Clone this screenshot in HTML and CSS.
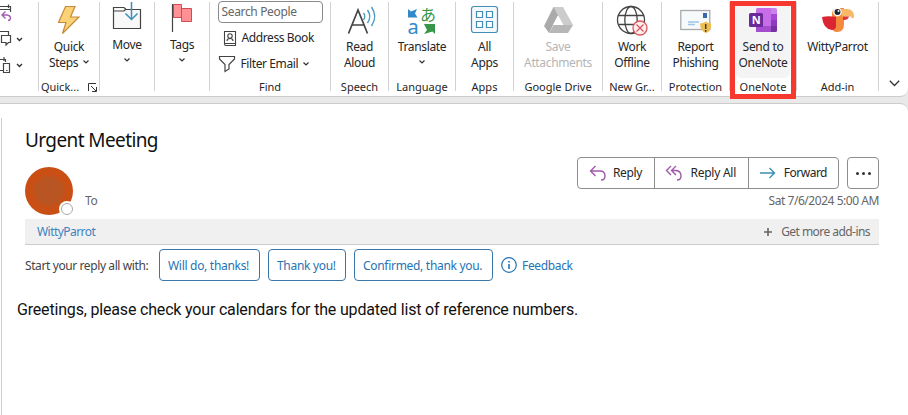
FILE: index.html
```html
<!DOCTYPE html>
<html lang="en">
<head>
<meta charset="utf-8">
<title>Urgent Meeting</title>
<link rel="stylesheet" href="styles.css">
</head>
<body>
<header class="ribbon">
  <section class="group g-edge">
    <svg class="edge" width="38" height="90" viewBox="0 0 38 90" fill="none" stroke="#444" stroke-width="1.2">
      <path d="M0 6.500H10.500V12M0 9.500H10.500M8.500 4.500V8"/><path d="M5.500 11.500L2 15L5.500 18.500M2 15H7Q10.500 15.500 10.500 18.500Q10 20.500 8 20.500" stroke="#a25fb0" stroke-width="1.4"/>
      <path d="M0 31.500H8.500V35M1.500 35.500H10.500V42.500H8.500L6 45V42.500H1.500Z"/>
      <path d="M0 59.500H5.500V62M4 57V61M3.500 63.500H9.500V72.500H3.500ZM0 70.500H3M6 70.500H7.500"/>
      <path d="M17 38L19.500 40.500L22 38M17 64L19.500 66.500L22 64" stroke="#333" stroke-width="1.4"/>
    </svg>
  </section>
  <section class="group g-quick">
    <svg class="icon" width="32" height="32" viewBox="0 0 32 32"><path d="M12.500 2.500H22L17.500 13H26L9.500 29.500L13 18.500H5.500Z" fill="#fbd276" stroke="#c78a3c" stroke-width="1.2"/></svg>
    <div class="label">Quick<br>Steps <svg class="chev" viewBox="0 0 6 4"><path d="M.5.5L3 3L5.500.5"/></svg></div>
    <footer>Quick...<svg class="launcher" width="9" height="9" viewBox="0 0 9 9" fill="none" stroke="#333"><path d="M.5 8V.5H8M3 3L8 8M8.500 4V8.500H4"/></svg></footer>
  </section>
  <section class="group g-move high">
    <svg class="icon" width="32" height="34" viewBox="0 0 32 34" fill="none" stroke="#444" stroke-width="1.2"><path d="M2.500 28.500V7.500H13L15 9.500H29.500V28.500Z" fill="#f8f8f8"/><path d="M3 11H13L15 9"/><path d="M20.500 2V19M14.500 13.500L20.500 19.500L26.500 13.500" stroke="#3b8dbb" stroke-width="1.5"/></svg>
    <div class="label">Move<br><svg class="chev" viewBox="0 0 6 4"><path d="M.5.5L3 3L5.500.5"/></svg></div>
  </section>
  <section class="group g-tags high">
    <svg class="icon" width="32" height="34" viewBox="0 0 32 34" fill="#ff9094" stroke="#d14c50"><path d="M15.500 8.500H25.500V21.500H15.500Z"/><path d="M7.500 4.500H15.500V17.500H7.500Z"/><path d="M6.500 4V32" stroke="#444" stroke-width="1.200"/></svg>
    <div class="label">Tags<br><svg class="chev" viewBox="0 0 6 4"><path d="M.5.5L3 3L5.500.5"/></svg></div>
  </section>
  <section class="group g-find">
    <div class="search">Search People</div>
    <div class="row r-book"><svg width="16" height="17" viewBox="0 0 16 17" fill="none" stroke="#444" stroke-width="1.1"><path d="M2.500 1.500H13.500V15.500H4Q2.500 15.500 2.500 14ZM2.500 13.500H13.500M5 11Q5 8.500 8 8.500T11 11"/><circle cx="8" cy="6" r="2.200"/></svg><span>Address Book</span></div>
    <div class="row r-filter"><svg width="18" height="18" viewBox="0 0 18 18" fill="none" stroke="#444" stroke-width="1.2"><path d="M1.500 1.500H16.500V4L11 9.500V14L7 16.500V9.500L1.500 4Z"/></svg><span>Filter Email</span><svg class="chev" viewBox="0 0 6 4"><path d="M.5.5L3 3L5.500.5"/></svg></div>
    <footer>Find</footer>
  </section>
  <section class="group g-speech">
    <svg class="icon" width="32" height="32" viewBox="0 0 32 32" fill="none" stroke="#444" stroke-width="1.7"><path d="M4.500 29.500L14 6L23.500 29.500M8 21H20"/><path d="M19.500 9Q22 12 19.500 16M23.500 6Q28 12.500 23.500 19M27.500 3Q34 12.500 27.500 22" stroke="#4b9ac2" stroke-width="1.400"/></svg>
    <div class="label">Read<br>Aloud</div>
    <footer>Speech</footer>
  </section>
  <section class="group g-lang">
    <svg class="icon" width="32" height="32" viewBox="0 0 32 32"><path d="M2 5L5 7.500L11 5L9 9.500L11.500 13.500H2Z" fill="#3289c9"/><path d="M18 20H29V30L26.500 27.500L18 30L21 26L18 20Z" fill="#379648"/><text class="tr-a" x="1.500" y="30">a</text><text class="tr-j" x="14" y="17">あ</text></svg>
    <div class="label">Translate<br><svg class="chev" viewBox="0 0 6 4"><path d="M.5.5L3 3L5.500.5"/></svg></div>
    <footer>Language</footer>
  </section>
  <section class="group g-apps">
    <svg class="icon" width="32" height="32" viewBox="0 0 32 32" fill="#f3f9fc" stroke="#438db9" stroke-width="1.200"><rect x="2.500" y="2.500" width="26" height="26" rx="2.500"/><g fill="#fff"><path d="M7.500 7.500H13.500V13.500H7.500ZM17.500 7.500H23.500V13.500H17.500ZM7.500 17.500H13.500V23.500H7.500ZM17.500 17.500H23.500V23.500H17.500Z"/></g></svg>
    <div class="label">All<br>Apps</div>
    <footer>Apps</footer>
  </section>
  <section class="group g-drive">
    <svg class="icon" width="32" height="32" viewBox="0 0 32 32"><path d="M11.500 3H21L13.500 16L7 29L2 22Z" fill="#aaa"/><path d="M11.500 3H21L31 21H21Z" fill="#ccc"/><path d="M7 29H26L31 21H11.500Z" fill="#b7b7b7"/><path d="M16 11.500L21.500 21H11Z" fill="#fff"/></svg>
    <div class="label off">Save<br>Attachments</div>
    <footer>Google Drive</footer>
  </section>
  <section class="group g-work">
    <svg class="icon" width="32" height="32" viewBox="0 0 32 32" fill="none" stroke="#444" stroke-width="1.300"><circle cx="15" cy="16" r="13.500"/><ellipse cx="15" cy="16" rx="6.200" ry="13.500"/><path d="M2.500 11.500H27.500M2.500 20.500H27.500"/><g stroke="#d9575d"><circle cx="24" cy="24" r="7" fill="#ffeeee"/><path d="M20.500 20.500L27.500 27.500M27.500 20.500L20.500 27.500"/></g></svg>
    <div class="label">Work<br>Offline</div>
    <footer>New Gr...</footer>
  </section>
  <section class="group g-report">
    <svg class="icon" width="32" height="32" viewBox="0 0 32 32"><rect x=".8" y="6.500" width="29" height="19" fill="#f7fafb" stroke="#a8a9aa" stroke-width="1.300"/><rect x="23" y="9" width="4" height="5" fill="#3969a8"/><path d="M8 18H19M8 20.500H15" stroke="#9ec5e5" stroke-width="1.300"/><path d="M20 19.500Q23.500 19.500 26 17.500Q28.500 19.500 31 19.500Q32 27 26 29Q20 27 20 19.500Z" fill="#edbd52"/><path d="M25.700 20V25M25.700 26V27.700" stroke="#4b3b1e" stroke-width="1.500"/></svg>
    <div class="label">Report<br>Phishing</div>
    <footer>Protection</footer>
  </section>
  <section class="group g-note">
    <div class="hover">
    <svg class="icon" width="32" height="32" viewBox="0 -2 32 32"><path d="M9 3.500Q9 2 10.500 2H24V26H9Z" fill="#c66de7"/><path d="M24 2H28.500Q30 2 30 3.500V8H24Z" fill="#c785eb"/><path d="M24 8H30V14H24Z" fill="#a447d3"/><path d="M24 14H30V20H24Z" fill="#8d3bbd"/><path d="M24 20H30V24.500Q30 26 28.500 26H9V20Z" fill="#7730a0"/><path d="M9 20H24V26H9Z" fill="#a44dcd"/><rect x="2" y="7" width="14" height="14" rx="1.500" fill="#6b2999"/><text class="note-n" x="9" y="18.200">N</text></svg>
    <div class="label">Send to<br>OneNote</div>
    </div>
    <footer>OneNote</footer>
  </section>
  <section class="group g-parrot">
    <svg class="icon" width="34" height="32" viewBox="0 0 34 32"><path d="M11 10Q11 4 17 4H23V20Q23 28 16 28Q11 28 11 23Z" fill="#f58a3c"/><path d="M1 13Q8 11.500 15 13V23Q14 26 11 26Q2 25 1 13Z" fill="#dc2532"/><path d="M21 5H26Q33 5 33 13Q31 16 30 12.500H21Z" fill="#f7b968"/><path d="M22 12.500H28Q27 16.500 22 16Z" fill="#dd3537"/><circle cx="16.500" cy="8" r="4.400" fill="#fff"/><circle cx="16.500" cy="8" r="3" fill="#20262b"/><circle cx="17.500" cy="7" r="1" fill="#fff"/></svg>
    <div class="label">WittyParrot</div>
    <footer>Add-in</footer>
  </section>
  <svg class="collapse" width="11" height="7" viewBox="0 0 11 7" fill="none" stroke="#333" stroke-width="1.300"><path d="M.8.8L5.500 5.500L10.200.8"/></svg>
  <div class="highlight"></div>
</header>
<main class="pane">
  <h1>Urgent Meeting</h1>
  <div class="head">
    <div class="avatar"><i class="presence"></i></div>
    <div class="to">To</div>
    <div class="side">
      <div class="actions">
        <div class="btns">
          <div class="btn b-reply"><svg width="18" height="16" viewBox="0 0 18 16" fill="none" stroke="#a05aaa" stroke-width="1.400"><path d="M6.500 1L1.500 6L6.500 11M1.500 6H11Q16 6 16 11Q16 15 12 15"/></svg><span>Reply</span></div>
          <div class="btn b-all"><svg width="18" height="16" viewBox="0 0 18 16" fill="none" stroke="#a05aaa" stroke-width="1.400"><path d="M6 1L1.500 5.500L6 10M11 1L6.500 5.500L11 10M6.500 5.500H11Q16 6 16 11Q16 15 12 15"/></svg><span>Reply All</span></div>
          <div class="btn b-fwd"><svg width="17" height="12" viewBox="0 0 17 12" fill="none" stroke="#3d8fb5" stroke-width="1.400"><path d="M1 6H15.500M10.500 1L15.500 6L10.500 11"/></svg><span>Forward</span></div>
        </div>
        <div class="more"><i></i><i></i><i></i></div>
      </div>
      <time>Sat 7/6/2024 5:00 AM</time>
    </div>
  </div>
  <div class="addins"><span class="wp">WittyParrot</span><svg width="8" height="8" viewBox="0 0 8 8" stroke="#666" stroke-width="1.600"><path d="M0 4H8M4 0V8"/></svg><span class="get">Get more add-ins</span></div>
  <div class="suggest">
    <span class="start">Start your reply all with:</span>
    <div class="chip c1"><span>Will do, thanks!</span></div>
    <div class="chip c2"><span>Thank you!</span></div>
    <div class="chip c3"><span>Confirmed, thank you.</span></div>
    <svg width="16" height="16" viewBox="0 0 16 16" fill="none" stroke="#2773b3"><circle cx="8" cy="8" r="7.300" stroke-width="1.200"/><path d="M8 7V12M8 4V5.600" stroke-width="1.600"/></svg>
    <span class="feedback">Feedback</span>
  </div>
  <p class="message">Greetings, please check your calendars for the updated list of reference numbers.</p>
</main>
</body>
</html>
```
FILE: styles.css
```css
* { box-sizing: border-box; }
body {
  margin: 0;
  width: 908px;
  height: 415px;
  overflow: hidden;
  display: flex;
  flex-direction: column;
  gap: 6px;
  background: #e9e9e9;
  font: 12px/16px "Noto Sans", "Open Sans", sans-serif;
  letter-spacing: -0.35px;
  color: #262626;
  white-space: nowrap;
}
svg { flex: none; display: block; overflow: visible; }

.ribbon {
  position: relative;
  display: flex;
  height: 97px;
  flex: none;
  background: #fff;
  border-bottom: 1px solid #ccc;
  border-radius: 0 0 8px 0;
}
.group {
  flex: none;
  height: 89px;
  margin-top: 2px;
  padding-top: 2px;
  border-right: 1px solid #d2d2d2;
  display: flex;
  flex-direction: column;
  align-items: center;
}
.group .icon { margin-bottom: 3px; }
.group.high { padding-top: 0; }
.high .icon { margin-bottom: 3px; margin-top: -2px; }
.label { text-align: center; height: 32px; }
.off { color: #b5b5b5; }
.group footer {
  margin-top: auto;
  margin-bottom: -4px;
  font-size: 11px;
  letter-spacing: 0;
  line-height: 16px;
  display: flex;
  align-items: center;
  justify-content: center;
}
.chev {
  display: inline-block;
  width: 6px;
  height: 4px;
  vertical-align: 3px;
  fill: none;
  stroke: #333;
  stroke-width: 1.2;
}
.g-quick .chev { margin-left: 2px; }
.launcher { margin-left: 9px; }
.g-edge { width: 39px; padding: 0; align-items: flex-start; }
.edge { margin-top: -2px; }
.g-quick { width: 61px; }
.g-move { width: 55px; }
.g-tags { width: 55px; }
.g-find { width: 121px; padding: 0; }
.g-speech { width: 58px; }
.g-lang { width: 67px; }
.g-apps { width: 58px; }
.g-drive { width: 89px; }
.g-work { width: 59px; }
.g-report { width: 68px; }
.g-note { width: 67px; }
.g-parrot { width: 82px; }

.search {
  flex: none;
  width: 105px;
  height: 22px;
  margin-top: -1px;
  border: 1px solid #8a8a8a;
  border-radius: 4px;
  padding-left: 3px;
  line-height: 20px;
  letter-spacing: -0.35px;
  color: #666;
}
.row { display: flex; align-items: center; width: 105px; height: 18px; gap: 4px; letter-spacing: -0.4px; }
.r-book { margin-top: 6px; padding-left: 4px; }
.r-filter { margin-top: 8px; gap: 5px; }
.hover {
  width: 54px;
  margin-top: -2px;
  padding-top: 2px;
  height: 76px;
  border-radius: 5px;
  background: #f4f4f4;
  display: flex;
  flex-direction: column;
  align-items: center;
}
.hover .label { letter-spacing: -0.3px; }
.tr-a { font: 20px "Noto Sans", sans-serif; fill: #3289c9; }
.tr-j { font: 16px "Noto Sans CJK JP", sans-serif; fill: #379648; }
.note-n { font: bold 11px "Noto Sans", sans-serif; fill: #fff; text-anchor: middle; }
.collapse { margin: 80px 0 0 10px; }
.highlight {
  position: absolute;
  left: 730px;
  top: 1px;
  width: 66px;
  height: 98px;
  border: 5px solid #f6382f;
}

.pane {
  position: relative;
  flex: 1;
  background: #fff;
  border-top: 1px solid #ccc;
  border-radius: 0 8px 0 0;
  padding: 22px 29px 0 25px;
}
.pane::before {
  content: "";
  position: absolute;
  left: 1px;
  top: 14px;
  bottom: 0;
  border-left: 1px solid #ccc;
}
h1 {
  margin: 0;
  font-size: 19px;
  font-weight: 400;
  line-height: 28px;
  letter-spacing: -0.6px;
  color: #111;
}
.head { display: flex; height: 65px; padding-top: 3px; }
.avatar {
  position: relative;
  width: 48px;
  height: 48px;
  margin-top: 10px;
  border-radius: 50%;
  background: radial-gradient(circle, #b95522 0 38%, #c94f14 50%);
}
.presence {
  position: absolute;
  right: 0;
  bottom: 0;
  width: 12px;
  height: 12px;
  border: 1px solid #aaa;
  border-radius: 50%;
  background: #fff;
  box-shadow: 0 0 0 2px #fff;
}
.to { margin: 36px 0 0 12px; color: #666; }
.side { margin-left: auto; text-align: right; }
.actions { display: flex; gap: 8px; justify-content: flex-end; }
.btns { display: flex; border: 1px solid #8d8d8d; border-radius: 4px; height: 32px; }
.btn { display: flex; align-items: center; }
.btn + .btn { border-left: 1px solid #8d8d8d; }
.btn span { margin-left: auto; }
.b-reply { width: 76px; padding: 0 12px 0 11px; }
.b-all { width: 94px; padding: 0 12px 0 10px; letter-spacing: -0.25px; }
.b-fwd { width: 90px; padding: 0 11px 0 10px; letter-spacing: -0.5px; }
.more {
  width: 32px;
  height: 32px;
  border: 1px solid #8d8d8d;
  border-radius: 4px;
  display: flex;
  align-items: center;
  justify-content: center;
  gap: 3px;
}
.more i { width: 3px; height: 3px; border-radius: 50%; background: #333; }
time { display: block; margin-top: 4px; color: #666; letter-spacing: -0.45px; }
.addins {
  display: flex;
  align-items: center;
  height: 26px;
  background: #f0f0f0;
  border-bottom: 1px solid #ccc;
  padding: 0 9px 0 12px;
  letter-spacing: -0.55px;
  color: #666;
}
.wp { color: #4182bf; margin-right: auto; }
.get { margin-left: 9px; }
.suggest { display: flex; align-items: center; margin-top: 4px; height: 32px; color: #444; }
.suggest span { padding-top: 1px; }
.start { width: 134px; letter-spacing: -0.4px; }
.chip {
  height: 32px;
  border: 1px solid #3a76a8;
  border-radius: 4px;
  display: flex;
  align-items: center;
  padding-left: 8px;
  margin-right: 8px;
  letter-spacing: -0.3px;
  color: #2773b3;
}
.c1 { width: 101px; }
.c2 { width: 78px; }
.c3 { width: 139px; }
.feedback { color: #2773b3; margin-left: 5px; }
.message {
  margin: 18px 0 0 -8px;
  font: 16px/22px Roboto, sans-serif;
  letter-spacing: -0.18px;
  color: #111;
}
```
